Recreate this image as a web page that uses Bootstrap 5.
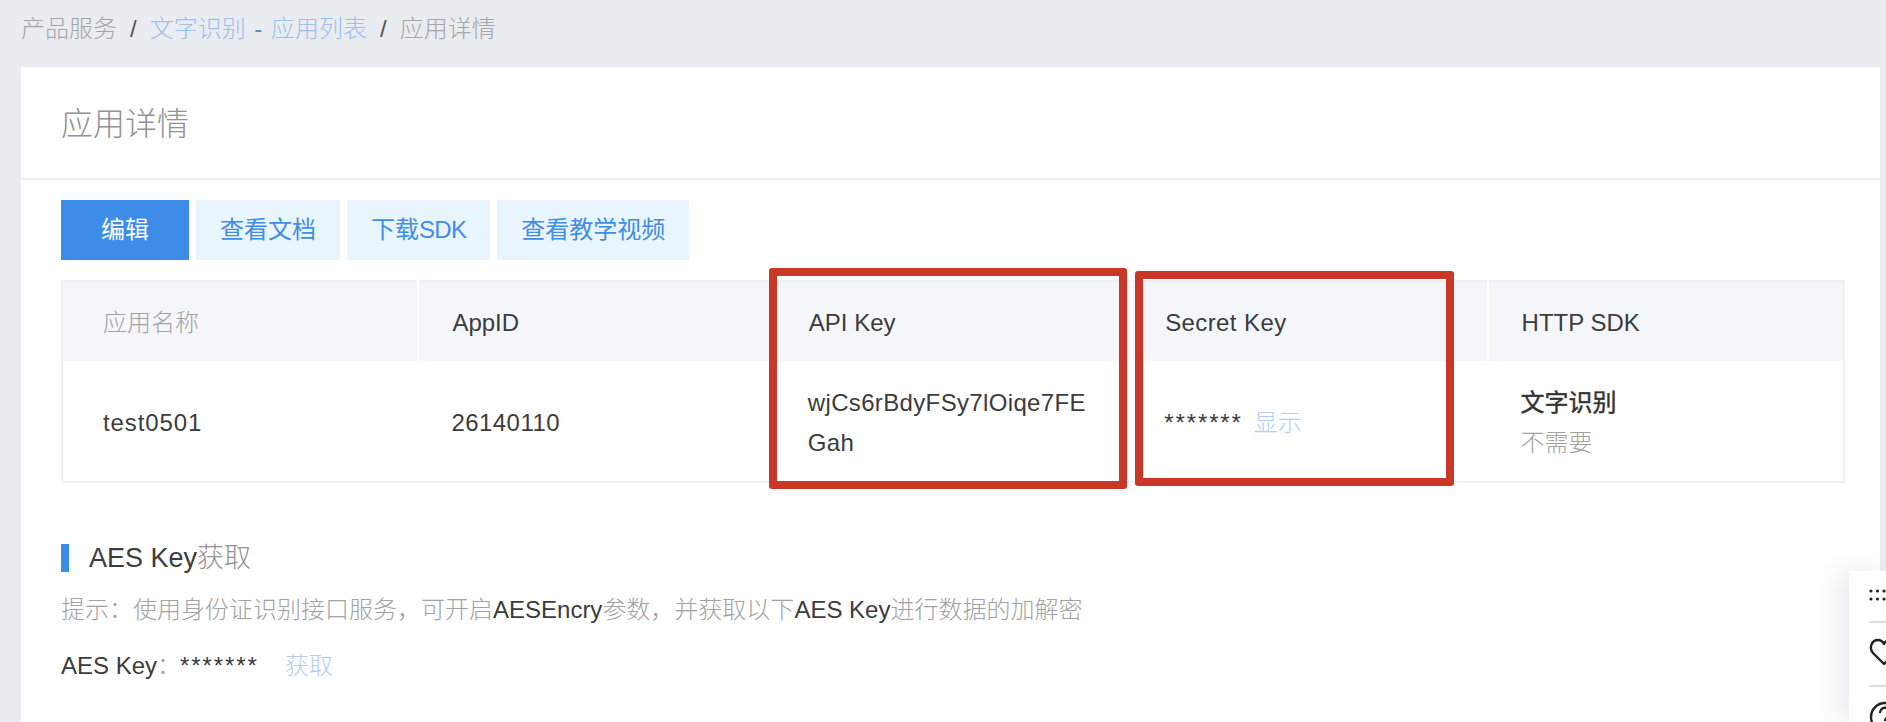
<!DOCTYPE html>
<html lang="zh-CN">
<head>
<meta charset="utf-8">
<title>应用详情</title>
<link rel="stylesheet" href="https://cdn.jsdelivr.net/npm/bootstrap@5.3.0/dist/css/bootstrap.min.css">
<style>
html,body{height:722px;overflow:hidden}
body{background:#e9ecf1;font-family:"Liberation Sans","Noto Sans CJK SC",sans-serif;font-size:24px;color:#3c3c3c;display:flex;flex-direction:column}
.thin{color:#a2a2a2;font-weight:300}
.crumbs{height:67px;padding:12px 0 0 21px;margin:0}
.crumbs .breadcrumb{margin:0;--bs-breadcrumb-item-padding-x:13px;--bs-breadcrumb-divider-color:#555;--bs-breadcrumb-item-active-color:#a6a6a6;line-height:34px}
.crumbs .breadcrumb-item{color:#a6a6a6;font-weight:300}
.crumbs .breadcrumb-item a{color:#9cc0ec;text-decoration:none}
.crumbs .dash{color:#4a8fe0;margin:0 2px}
.sheet{flex:1;margin:0 6px 0 21px;border:0;border-radius:0;background:#fff}
.sheet-head{height:113px;border-bottom:2px solid #ededed;padding:3px 0 0 40px;display:flex;align-items:center;font-size:32px;font-weight:300;color:#929292;background:#fff}
.sheet-body{padding:20px 35px 0 40px}
.tool-btn{height:60px;padding:0 24px;font-size:24px;line-height:60px;border:0;border-radius:0;background:#e9f5fc;color:#3f8de6}
.tool-btn.main-btn{padding:0 40px;background:#3d8ce8;color:#fff}
.tools{gap:7px}
.sdk-word{letter-spacing:-.7px}
.grid-wrap{position:relative;margin:20px 0 0 0}
.key-grid{table-layout:fixed;width:100%;margin:0;border:2px solid #eef0f4;font-size:24px;--bs-table-color:#3c3c3c}
.key-grid th{height:80px;background:#f5f6fa;font-weight:400;border:0;border-right:2px solid #fff;padding:2px 32px 0 33px;vertical-align:middle}
.key-grid th:last-child{border-right:0}
.key-grid td{height:120px;border:0;padding:22px 39px 18px 33px;line-height:40px;vertical-align:middle;word-break:break-all}
.key-grid th:first-child,.key-grid td:first-child{padding-left:40px}
.sp-name{letter-spacing:.9px}
.sp-num{letter-spacing:.45px}
.sp-key{letter-spacing:.35px}
.sp-secret{letter-spacing:.4px}
.stars{letter-spacing:1.9px}
.strong-line{font-weight:400;-webkit-text-stroke:.45px #333;color:#333;line-height:40px}
.soft-link{color:#b3cff0;text-decoration:none;font-weight:300}
.gap-s{margin-left:11px}
.gap-l{margin-left:26px}
.mark-box{position:absolute;border:8px solid #c93727;border-radius:3px;pointer-events:none}
.mark-a{left:708px;top:-12px;width:358px;height:221px}
.mark-b{left:1074px;top:-9px;width:319px;height:215px}
.sect-title{margin:61px 0 0 0;padding-left:20px;border-left:8px solid #3d8ce8;height:28px;line-height:28px;font-size:27px;font-weight:400;color:#3c3c3c}
.sect-title span{font-weight:300;color:#929292}
.hint{margin:21px 0 0 0;line-height:34px;white-space:nowrap}
.key-line{margin:22px 0 0 0;line-height:34px;white-space:nowrap}
.key-line .thin{margin-right:-1px}
.float-rail{position:fixed;right:0;top:571px;bottom:0;width:37px;background:#fff;box-shadow:-8px 0 26px rgba(60,70,110,.12);overflow:hidden;padding-left:20px}
.rail-dots{height:50px;padding-top:18px}
.rail-cell{height:64px;border-top:2px solid #ddd;padding-top:14px}
.rail-cell svg,.rail-dots svg{display:block}
</style>
</head>
<body>
<nav class="crumbs" aria-label="breadcrumb">
  <ol class="breadcrumb">
    <li class="breadcrumb-item">产品服务</li>
    <li class="breadcrumb-item"><a href="#">文字识别 <span class="dash">-</span> 应用列表</a></li>
    <li class="breadcrumb-item active" aria-current="page">应用详情</li>
  </ol>
</nav>
<main class="card sheet">
  <div class="sheet-head">应用详情</div>
  <div class="sheet-body">
    <div class="d-flex tools">
      <button type="button" class="btn tool-btn main-btn">编辑</button>
      <button type="button" class="btn tool-btn">查看文档</button>
      <button type="button" class="btn tool-btn">下载<span class="sdk-word">SDK</span></button>
      <button type="button" class="btn tool-btn">查看教学视频</button>
    </div>
    <div class="grid-wrap">
      <table class="table key-grid">
        <thead>
          <tr><th><span class="thin">应用名称</span></th><th>AppID</th><th>API Key</th><th><span class="sp-secret">Secret Key</span></th><th>HTTP SDK</th></tr>
        </thead>
        <tbody>
          <tr>
            <td class="sp-name">test0501</td>
            <td class="sp-num">26140110</td>
            <td class="sp-key">wjCs6rBdyFSy7lOiqe7FEGah</td>
            <td><span class="stars">*******</span><a class="soft-link gap-s" href="#">显示</a></td>
            <td><div class="strong-line">文字识别</div><div class="thin">不需要</div></td>
          </tr>
        </tbody>
      </table>
      <div class="mark-box mark-a"></div>
      <div class="mark-box mark-b"></div>
    </div>
    <h2 class="sect-title">AES Key<span>获取</span></h2>
    <p class="hint"><span class="thin">提示：使用身份证识别接口服务，可开启</span>AESEncry<span class="thin">参数，并获取以下</span>AES Key<span class="thin">进行数据的加解密</span></p>
    <p class="key-line">AES Key<span class="thin">：</span><span class="stars">*******</span><a class="soft-link gap-l" href="#">获取</a></p>
  </div>
</main>
<aside class="float-rail">
  <div class="rail-dots">
    <svg width="20" height="14" viewBox="0 0 20 14" fill="#222"><circle cx="2" cy="2" r="1.6"/><circle cx="8.5" cy="2" r="1.6"/><circle cx="15" cy="2" r="1.6"/><circle cx="2" cy="10" r="1.6"/><circle cx="8.5" cy="10" r="1.6"/><circle cx="15" cy="10" r="1.6"/></svg>
  </div>
  <div class="rail-cell">
    <svg width="30" height="30" viewBox="0 0 30 30" fill="none" stroke="#222" stroke-width="2.4" stroke-linejoin="round"><path d="M15 27 4 16C0 12 2 3 9 3c3 0 5 2 6 4 1-2 3-4 6-4 7 0 9 9 5 13Z"/></svg>
  </div>
  <div class="rail-cell">
    <svg width="32" height="32" viewBox="0 0 32 32" fill="none" stroke="#222" stroke-width="2.4"><circle cx="16" cy="16" r="14"/><path d="M11 12c0-7 10-7 10 0 0 4-5 4-5 8"/></svg>
  </div>
</aside>
<script src="https://cdn.jsdelivr.net/npm/bootstrap@5.3.0/dist/js/bootstrap.bundle.min.js"></script>
</body>
</html>
